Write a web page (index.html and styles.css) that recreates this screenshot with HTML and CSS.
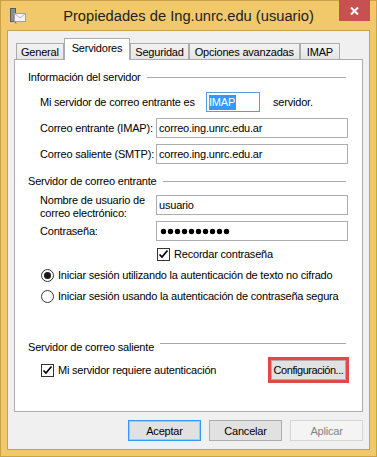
FILE: index.html
```html
<!DOCTYPE html>
<html lang="es">
<head>
  <meta charset="UTF-8">
  <title>Propiedades de Ing.unrc.edu (usuario)</title>
  <link rel="stylesheet" href="styles.css">
</head>
<body>
  <div class="window">
    <div class="titlebar">
      <span class="app-icon">
        <svg width="16" height="16" viewBox="0 0 16 16">
          <rect x="0.5" y="0.5" width="5" height="13" fill="#8e8e8e" stroke="#5c5c5c"/>
          <rect x="1.5" y="2.5" width="3" height="1" fill="#3a9ad9"/>
          <rect x="1.5" y="5" width="3" height="1" fill="#5fb84a"/>
          <rect x="4.5" y="5.5" width="11" height="8" fill="#f4f4f4" stroke="#a0a0a0"/>
          <path d="M4.5 5.5 L10 10 L15.5 5.5" fill="none" stroke="#b4b4b4"/>
          <path d="M5 14 L6 15.5" stroke="#5c5c5c"/>
        </svg>
      </span>
      <h1 class="title">Propiedades de Ing.unrc.edu (usuario)</h1>
      <button class="close-button" aria-label="Cerrar">
        <svg width="9" height="8" viewBox="0 0 9 8">
          <path d="M1 0.5 L8 7.5 M8 0.5 L1 7.5" stroke="#fff" stroke-width="2"/>
        </svg>
      </button>
    </div>

    <div class="client">
      <nav class="tabs">
        <button class="tab">General</button>
        <button class="tab active">Servidores</button>
        <button class="tab">Seguridad</button>
        <button class="tab tab-wide">Opciones avanzadas</button>
        <button class="tab tab-short">IMAP</button>
      </nav>

      <section class="tab-panel">
        <div class="group-head"><span>Información del servidor</span></div>
        <div class="row server-type">
          <span class="type-label">Mi servidor de correo entrante es</span>
          <span class="field field-focus type-field"><span class="selection">IMAP</span></span>
          <span>servidor.</span>
        </div>
        <div class="row field-row">
          <label>Correo entrante (IMAP):</label>
          <input class="field" type="text" value="correo.ing.unrc.edu.ar" readonly>
        </div>
        <div class="row field-row">
          <label>Correo saliente (SMTP):</label>
          <input class="field" type="text" value="correo.ing.unrc.edu.ar" readonly>
        </div>

        <div class="group-head"><span>Servidor de correo entrante</span></div>
        <div class="row field-row user-row">
          <label>Nombre de usuario de<br>correo electrónico:</label>
          <input class="field" type="text" value="usuario" readonly>
        </div>
        <div class="row field-row password-row">
          <label>Contraseña:</label>
          <span class="field"><span class="dots"></span></span>
        </div>
        <div class="row check-row remember">
          <span class="checkbox checked">
            <svg width="11" height="11" viewBox="0 0 11 11"><path d="M1.5 5.5 L4 8 L9.5 1.5" fill="none" stroke="#000" stroke-width="1.7"/></svg>
          </span>
          <span>Recordar contraseña</span>
        </div>
        <div class="row check-row option">
          <span class="radio checked"></span>
          <span>Iniciar sesión utilizando la autenticación de texto no cifrado</span>
        </div>
        <div class="row check-row option">
          <span class="radio"></span>
          <span>Iniciar sesión usando la autenticación de contraseña segura</span>
        </div>

        <div class="group-head outgoing"><span>Servidor de correo saliente</span></div>
        <div class="row check-row auth-row">
          <span class="checkbox checked">
            <svg width="11" height="11" viewBox="0 0 11 11"><path d="M1.5 5.5 L4 8 L9.5 1.5" fill="none" stroke="#000" stroke-width="1.7"/></svg>
          </span>
          <span>Mi servidor requiere autenticación</span>
          <button class="button config-button">Configuración...</button>
        </div>
      </section>

      <div class="dialog-buttons">
        <button class="button default">Aceptar</button>
        <button class="button">Cancelar</button>
        <button class="button" disabled>Aplicar</button>
      </div>
    </div>
  </div>
</body>
</html>
```

FILE: styles.css
```css
* {
  margin: 0;
  padding: 0;
  box-sizing: border-box;
}

body {
  width: 377px;
  height: 457px;
  overflow: hidden;
  font-family: "Liberation Sans", Arial, sans-serif;
  font-size: 11px;
  letter-spacing: -0.2px;
  color: #000;
}

button,
input {
  font: inherit;
  letter-spacing: inherit;
  color: inherit;
}

.window {
  height: 457px;
  display: flex;
  flex-direction: column;
  background: #f1c96b;
  border: 1px solid #c9a24d;
}

/* title bar */
.titlebar {
  height: 29px;
  display: grid;
  grid-template-columns: 1fr auto 1fr;
  align-items: center;
}

.app-icon {
  display: flex;
  padding-left: 9px;
}

.title {
  font-size: 14.7px;
  font-weight: normal;
  letter-spacing: 0;
  color: #222;
}

.close-button {
  justify-self: end;
  align-self: start;
  width: 31px;
  height: 21px;
  margin: -1px 6px 0 0;
  background: #c75050;
  border: none;
  display: flex;
  align-items: center;
  justify-content: center;
}

/* client area */
.client {
  flex: 1;
  margin: 0 6px 6px;
  padding: 7px 6px 0;
  border: 1px solid #c9a24d;
  background: #f0f0f0;
  display: flex;
  flex-direction: column;
}

.tabs {
  display: flex;
  align-items: flex-end;
  height: 21px;
  padding-left: 2px;
  position: relative;
  z-index: 1;
}

.tab {
  height: 16px;
  padding: 0 4px;
  border: 1px solid #acacac;
  border-bottom: none;
  background: linear-gradient(#f2f2f2, #e6e6e6);
  line-height: 14px;
}

.tab.active {
  height: 22px;
  padding: 0 7px 3px;
  margin-bottom: -1px;
  background: #fff;
  line-height: 17px;
}

.tab-wide {
  padding: 0 5px;
}

.tab-short {
  padding: 0 6px;
}

.tab-panel {
  height: 353px;
  padding: 0 14px 0 13px;
  background: #fff;
  border: 1px solid #acacac;
  display: flex;
  flex-direction: column;
}

.group-head {
  display: flex;
  align-items: center;
  height: 14px;
  margin-top: 10px;
}

.group-head::after {
  content: '';
  flex: 1;
  height: 1px;
  margin: 0 2px 0 6px;
  background: #a8a8a8;
}

.group-head.outgoing {
  margin-top: 37px;
}

.group-head.outgoing::after {
  margin-bottom: 8px;
}

.row {
  display: flex;
  align-items: center;
  margin-top: 6px;
  padding-left: 12px;
}

.server-type {
  height: 20px;
  margin-top: 8px;
}

.type-label {
  width: 166px;
}

.type-field {
  width: 54px;
  margin-right: 13px;
}

.field-row {
  display: grid;
  grid-template-columns: 116px 1fr;
  align-items: center;
}

.field {
  display: block;
  height: 20px;
  padding: 0 2px;
  border: 1px solid #abadb3;
  background: #fff;
  line-height: 18px;
  outline: none;
}

.field-focus {
  border-color: #569de5;
  display: flex;
  align-items: center;
}

.selection {
  background: #3399ff;
  color: #fff;
  line-height: 15px;
  padding: 0 1px 0 0;
}

.user-row {
  align-items: start;
  margin-top: 6px;
}

.user-row label {
  line-height: 13px;
}

.user-row .field {
  margin-top: 1px;
}

.password-row {
  margin-top: 1px;
}

.dots {
  display: block;
  width: 70px;
  height: 18px;
  margin-left: 1px;
  background: radial-gradient(circle, #000 2.5px, transparent 3.1px) 0 center / 7px 7px repeat-x;
}

.check-row {
  height: 14px;
  gap: 4px;
}

.remember {
  padding-left: 129px;
}

.option {
  margin-top: 7px;
  padding-left: 13px;
}

.checkbox {
  width: 13px;
  height: 13px;
  border: 1px solid #333;
  background: #fff;
  display: flex;
  align-items: center;
  justify-content: center;
}

.auth-row {
  height: 20px;
  padding-left: 13px;
}

.radio {
  width: 13px;
  height: 13px;
  border: 1px solid #333;
  border-radius: 50%;
  background: #fff;
  display: flex;
  align-items: center;
  justify-content: center;
}

.radio.checked::after {
  content: '';
  width: 7px;
  height: 7px;
  border-radius: 50%;
  background: #1a1a1a;
}

.button {
  width: 73px;
  height: 21px;
  border: 1px solid #adadad;
  background: #e1e1e1;
}

.button.default {
  border-color: #3399ff;
  box-shadow: inset 0 0 0 1px rgba(51, 153, 255, 0.35);
}

.button:disabled {
  border-color: #d5d5d5;
  background: #f4f4f4;
  color: #838383;
}

.config-button {
  width: 75px;
  height: 20px;
  margin: 0 2px 0 auto;
  padding: 0;
  letter-spacing: -0.45px;
  white-space: nowrap;
  outline: 3px solid #e3474a;
}

.dialog-buttons {
  display: flex;
  justify-content: flex-end;
  gap: 8px;
  margin-top: 8px;
}
```
